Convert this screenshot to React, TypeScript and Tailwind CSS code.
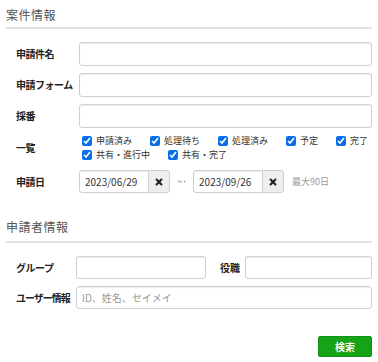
import { useState } from 'react';

const font = { fontFamily: '"Noto Sans CJK JP", "Noto Sans", sans-serif' };

const inputCls =
  'block w-full rounded-[3px] border border-[#cfcfcf] bg-white px-[5px] text-[10px] text-[#333] shadow-[inset_0_1px_1px_rgba(0,0,0,0.08)] outline-none placeholder:text-[#999]';

function Label({ children, w, tight }: { children: React.ReactNode; w: string; tight?: boolean }) {
  return (
    <div
      className={`${w} shrink-0 whitespace-nowrap text-[10px] font-bold leading-[14px] text-[#222] ${
        tight ? 'tracking-[-1px]' : 'tracking-[-0.5px]'
      }`}
    >
      {children}
    </div>
  );
}

function DateField({ value }: { value: string }) {
  return (
    <div className="flex h-[23px] w-[91px]">
      <input
        readOnly
        value={value}
        className="h-full w-[70px] rounded-l-[3px] border border-[#cfcfcf] bg-white px-[5px] text-[10px] text-[#333] shadow-[inset_0_1px_1px_rgba(0,0,0,0.08)] outline-none"
      />
      <button className="-ml-px flex h-full w-[22px] items-center justify-center rounded-r-[3px] border border-[#cfcfcf] bg-[#eeeeee]">
        <svg width="8" height="8" viewBox="0 0 10 10">
          <path d="M2 2L8 8M8 2L2 8" stroke="#222" strokeWidth="2.6" strokeLinecap="round" />
        </svg>
      </button>
    </div>
  );
}

function Check({ label }: { label: string }) {
  const [on, setOn] = useState(true);
  return (
    <label className="flex items-center gap-[4px]">
      <input
        type="checkbox"
        checked={on}
        onChange={() => setOn(!on)}
        className="m-0 h-[10px] w-[10px] accent-[#0a6fe6]"
      />
      <span className="text-[9px] leading-[14px] text-[#333]">{label}</span>
    </label>
  );
}

export default function App() {
  const statuses = ['申請済み', '処理待ち', '処理済み', '予定', '完了', '共有・進行中', '共有・完了'];

  return (
    <div style={font} className="h-[362px] w-[378px] overflow-hidden bg-white px-[6px]">
      {/* 案件情報 */}
      <div className="border-b-2 border-[#e3e3e3] pt-[7px] pb-[4px] text-[12px] leading-[16px] tracking-[0.5px] text-[#555]">
        案件情報
      </div>

      <div className="mt-[13px] flex flex-col gap-[7px] pl-[10px]">
        <div className="flex items-center">
          <Label w="w-[63px]">申請件名</Label>
          <input className={`${inputCls} h-[24px]`} />
        </div>
        <div className="flex items-center">
          <Label w="w-[63px]">申請フォーム</Label>
          <input className={`${inputCls} h-[24px]`} />
        </div>
        <div className="flex items-center">
          <Label w="w-[63px]">採番</Label>
          <input className={`${inputCls} h-[24px]`} />
        </div>
      </div>

      <div className="mt-[6px] flex items-center pl-[10px]">
        <Label w="w-[66px]">一覧</Label>
        <div className="flex flex-wrap gap-x-[18px]">
          {statuses.map((s) => (
            <Check key={s} label={s} />
          ))}
        </div>
      </div>

      <div className="mt-[8px] flex items-center pl-[10px]">
        <Label w="w-[63px]">申請日</Label>
        <DateField value="2023/06/29" />
        <span className="ml-[7px] mr-[6px] text-[9px] text-[#555]">~·</span>
        <DateField value="2023/09/26" />
        <span className="ml-[8px] text-[9px] text-[#999]">最大90日</span>
      </div>

      {/* 申請者情報 */}
      <div className="mt-[26px] border-b-2 border-[#e3e3e3] pb-[6px] text-[12px] leading-[16px] tracking-[0.5px] text-[#555]">
        申請者情報
      </div>

      <div className="mt-[13px] flex flex-col gap-[7px] pl-[10px]">
        <div className="flex items-center">
          <Label w="w-[60px]">グループ</Label>
          <input className={`${inputCls} h-[23px] !w-[130px] shrink-0`} />
          <div className="ml-[14px] w-[25px] shrink-0 text-[10px] font-bold text-[#222]">役職</div>
          <input className={`${inputCls} h-[23px]`} />
        </div>
        <div className="flex items-center">
          <Label w="w-[60px]" tight>
            ユーザー情報
          </Label>
          <input className={`${inputCls} h-[23px]`} placeholder="ID、姓名、セイメイ" />
        </div>
      </div>

      <div className="mt-[27px] flex justify-end pr-[-1px]">
        <button className="h-[21px] w-[54px] rounded-[2px] border border-[#12901a] bg-[#17a317] text-[10px] font-bold text-white">
          検索
        </button>
      </div>
    </div>
  );
}
